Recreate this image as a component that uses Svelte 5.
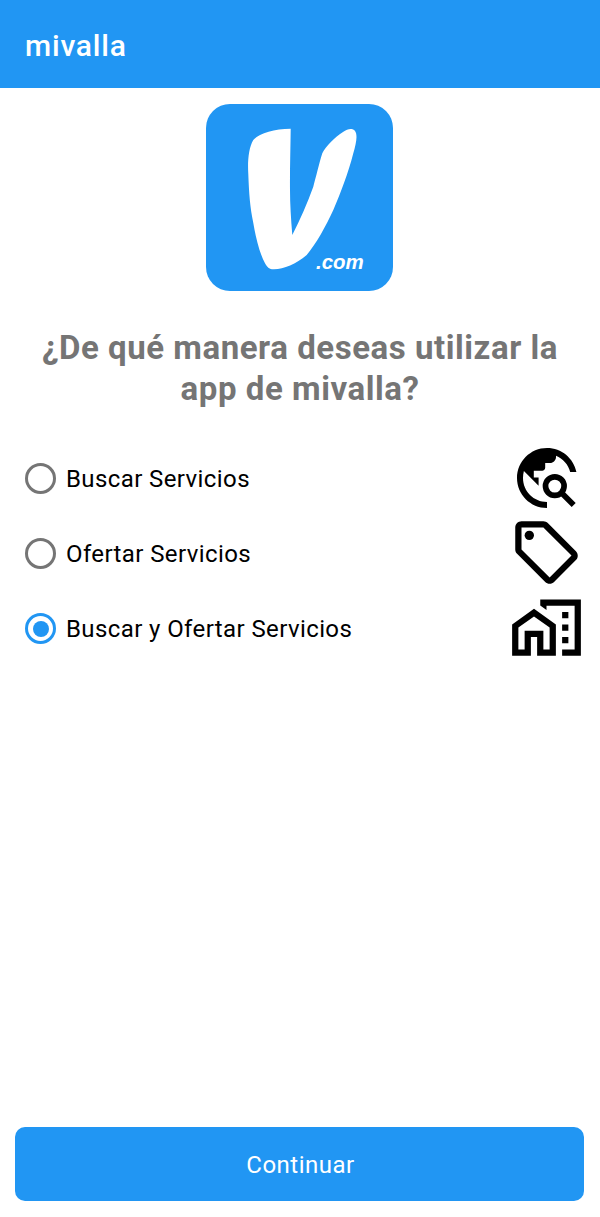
<script>
  const options = [
    { id: 'buscar', label: 'Buscar Servicios' },
    { id: 'ofertar', label: 'Ofertar Servicios' },
    { id: 'ambos', label: 'Buscar y Ofertar Servicios' }
  ];

  let selected = $state('ambos');
</script>

<div class="page">
  <header class="app-bar">mivalla</header>

  <main class="content">
    <svg class="logo" viewBox="0 0 187 187" role="img" aria-label="mivalla.com">
      <rect width="187" height="187" rx="24" fill="#2196f3" />
      <path
        fill="#fff"
        d="M84.7 24.7C68 25 53 29 47.3 36C42.5 44 41.5 58 42.3 70C43 90 44 103 47.3 119C50 135 54 150 59 159.3C61.5 164 64 165.5 68 165.3C78 165 90 160 100.7 151C110 140 120 122 127.3 106C135 88 142 70 147.3 49.3C150 40 152 31 149 27C146.5 24 142 24.5 137 28C128 34 120 42 116.3 49.3C113 60 110 73 107.3 82.7C101 100 94 116 86.3 131C85 115 84 100 84 86C83.8 65 84.5 45 84.7 24.7Z"
      />
      <text x="110" y="165" class="logo-suffix">.com</text>
    </svg>

    <h1>¿De qué manera deseas utilizar la app de mivalla?</h1>

    <div class="options" role="radiogroup">
      {#each options as option}
        <label class="option">
          <input type="radio" name="uso" value={option.id} bind:group={selected} />
          <span class="radio" class:checked={selected === option.id}></span>
          <span class="label">{option.label}</span>
          <svg class="icon" class:globe={option.id === 'buscar'} viewBox="0 0 24 24" aria-hidden="true">
            {#if option.id === 'buscar'}
              <path d="M12 22C6.48 22 2 17.52 2 12S6.48 2 12 2c4.84 0 8.87 3.44 9.8 8h-2.07c-.64-2.46-2.4-4.47-4.73-5.41V5c0 1.1-.9 2-2 2h-1.6v1.6c0 .55-.45 1-1 1H7.6v2.2h1.6v2.8L4.3 9.7C4.1 10.5 4 11.2 4 12c0 4.41 3.59 8 8 8z" />
              <circle class="lens" cx="14.6" cy="14.7" r="3.1" />
              <line class="lens" x1="16.9" y1="17" x2="20.9" y2="21" />
            {:else if option.id === 'ofertar'}
              <path d="M21.41 11.58l-9-9C12.05 2.22 11.55 2 11 2H4c-1.1 0-2 .9-2 2v7c0 .55.22 1.05.59 1.42l9 9c.36.36.86.58 1.41.58s1.05-.22 1.41-.59l7-7c.37-.36.59-.86.59-1.41s-.23-1.06-.59-1.42zM13 20.01L4 11V4h7v-.01l9 9-7 7.02z" />
              <circle cx="6.5" cy="6.5" r="1.5" />
            {:else}
              <path d="M1 11v10h6v-6h2v6h6V11L8 6l-7 5zm12 8h-2v-6H5v6H3v-7l5-3.5 5 3.5v7z" />
              <path d="M17 7h2v2h-2zM17 11h2v2h-2zM17 15h2v2h-2z" />
              <path d="M10 3v1.97l2 1.43V5h9v14h-4v2h6V3z" />
            {/if}
          </svg>
        </label>
      {/each}
    </div>
  </main>

  <footer class="footer">
    <button type="button" class="continue">Continuar</button>
  </footer>
</div>

<style>
  :global(body) {
    background: #fff;
  }

  .page {
    display: flex;
    flex-direction: column;
    min-height: 100vh;
    font-family: Roboto, 'Liberation Sans', sans-serif;
  }

  .app-bar {
    display: flex;
    align-items: center;
    height: 88px;
    padding: 2px 0 0 25px;
    box-sizing: border-box;
    background: #2196f3;
    color: #fff;
    font-size: 30px;
    font-weight: 500;
    letter-spacing: 0.8px;
  }

  .content {
    display: flex;
    flex-direction: column;
    align-items: center;
    padding-top: 16px;
  }

  .logo {
    width: 187px;
    height: 187px;
    margin-left: -1px;
  }

  .logo-suffix {
    fill: #fff;
    font-family: 'Liberation Sans', sans-serif;
    font-size: 20.5px;
    font-style: italic;
    font-weight: 700;
  }

  h1 {
    margin: 36px 0 33px;
    padding: 0 32px;
    color: #757575;
    font-size: 33px;
    font-weight: 700;
    letter-spacing: 0.55px;
    line-height: 41px;
    text-align: center;
  }

  .options {
    display: flex;
    flex-direction: column;
    align-self: stretch;
    padding: 0 16px 0 25px;
  }

  .option {
    display: flex;
    align-items: center;
    height: 75px;
  }

  .option input {
    display: none;
  }

  .radio {
    display: flex;
    align-items: center;
    justify-content: center;
    width: 31px;
    height: 31px;
    box-sizing: border-box;
    border: 3px solid #757575;
    border-radius: 50%;
    margin-top: -2px;
  }

  .radio.checked {
    border-color: #2196f3;
  }

  .radio.checked::after {
    content: '';
    width: 16px;
    height: 16px;
    border-radius: 50%;
    background: #2196f3;
  }

  .label {
    flex: 1;
    margin: -2px 0 0 10px;
    color: #000;
    font-size: 24px;
    letter-spacing: 0.4px;
  }

  .icon {
    width: 75px;
    height: 75px;
    margin-top: -4px;
    fill: #000;
  }

  .icon.globe {
    width: 72px;
    height: 72px;
    margin: -3px 1px 0 0;
  }

  .lens {
    fill: none;
    stroke: #000;
    stroke-width: 1.9;
  }

  .footer {
    display: flex;
    margin-top: auto;
    padding: 0 16px 16px 15px;
  }

  .continue {
    flex: 1;
    height: 74px;
    padding: 2px 0 0 2px;
    border: none;
    border-radius: 10px;
    background: #2196f3;
    color: #fff;
    font-family: inherit;
    font-size: 24px;
    letter-spacing: 0.5px;
  }
</style>
